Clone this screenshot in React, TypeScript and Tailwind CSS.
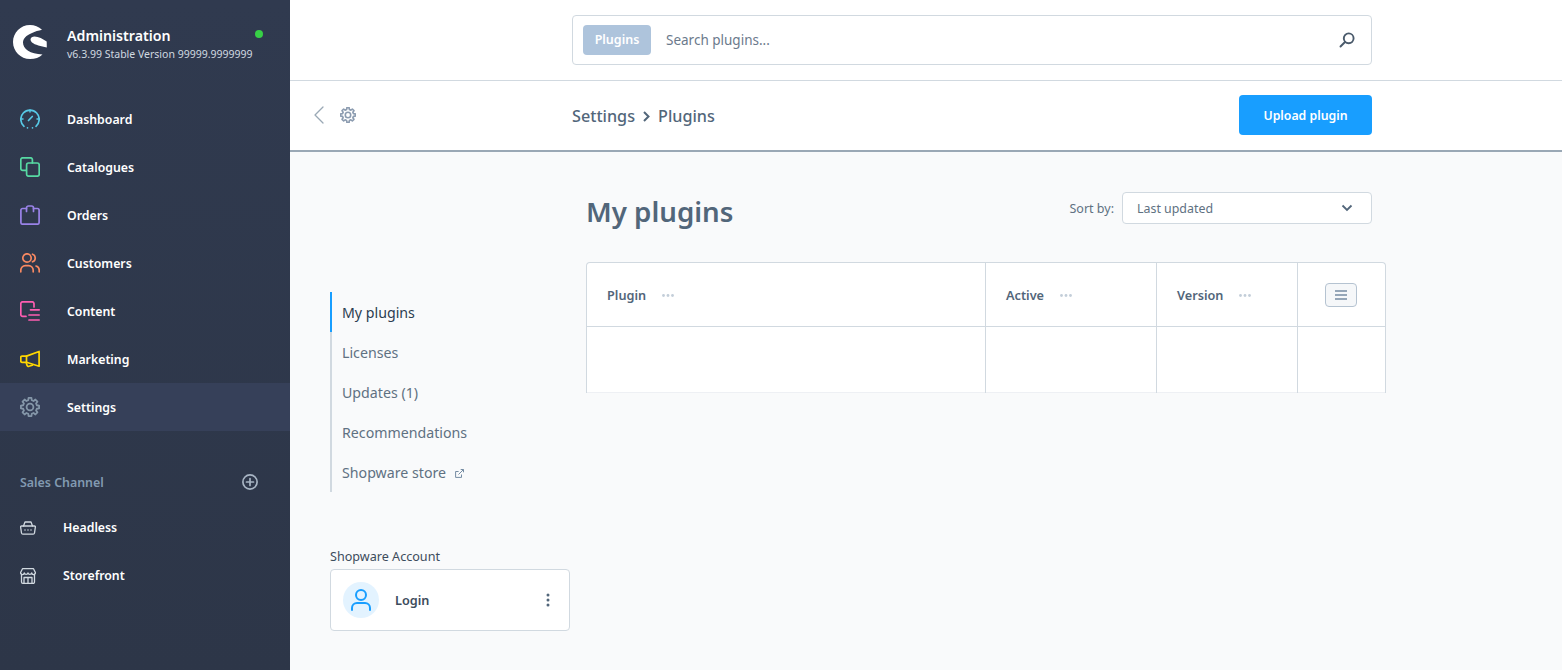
import React from "react";

function gearPath(outer: number, inner: number, teeth: number, c: number) {
  const pts: string[] = [];
  const step = (Math.PI * 2) / teeth;
  for (let i = 0; i < teeth; i++) {
    const a = i * step - Math.PI / 2;
    const add = (r: number, off: number) => {
      const x = c + r * Math.cos(a + off * step);
      const y = c + r * Math.sin(a + off * step);
      pts.push(`${x.toFixed(2)} ${y.toFixed(2)}`);
    };
    add(outer, -0.2);
    add(outer, 0.2);
    add(inner, 0.32);
    add(inner, 0.68);
  }
  return "M" + pts.join("L") + "Z";
}

function Gear({ size, color, strokeWidth }: { size: number; color: string; strokeWidth: number }) {
  return (
    <svg width={size} height={size} viewBox="0 0 20 20" fill="none" stroke={color} strokeWidth={strokeWidth} strokeLinejoin="round">
      <path d={gearPath(9.2, 7, 8, 10)} />
      <circle cx="10" cy="10" r="3.4" />
    </svg>
  );
}

function NavIcon({ name, color }: { name: string; color: string }) {
  const p = { width: 20, height: 20, viewBox: "0 0 20 20", fill: "none", stroke: color, strokeWidth: 1.7, strokeLinecap: "round" as const, strokeLinejoin: "round" as const };
  switch (name) {
    case "dashboard":
      return (
        <svg {...p}>
          <path d="M4 17.300A9.200 9.200 0 1 1 16 17.300" />
          <path d="M8.500 11.500 12.300 7.500" />
          <path d="M10 1v2M1.200 10h1.800M17 10h1.800" strokeWidth="1.500" />
          <path d="M7.500 18.800h.01M12.500 18.800h.01" />
        </svg>
      );
    case "catalogues":
      return (
        <svg {...p}>
          <path d="M6 13.400H2.700A1.900 1.900 0 0 1 .8 11.500V2.700A1.900 1.900 0 0 1 2.700.8h7.800a1.900 1.900 0 0 1 1.900 1.900V6" />
          <rect x="6.600" y="6" width="12.600" height="13.200" rx="1.900" />
        </svg>
      );
    case "orders":
      return (
        <svg {...p}>
          <path d="M6.500 3.500H2.600A1.700 1.700 0 0 0 .9 5.200V17.500A1.700 1.700 0 0 0 2.600 19.200H17.400A1.700 1.700 0 0 0 19.100 17.500V5.200A1.700 1.700 0 0 0 17.400 3.500H13.500" />
          <path d="M6.500 6.500V3a2 2 0 0 1 2-2h3a2 2 0 0 1 2 2v3.500" />
        </svg>
      );
    case "customers":
      return (
        <svg {...p}>
          <circle cx="7" cy="5" r="4.200" />
          <path d="M.8 18.800v-1.600a4.500 4.500 0 0 1 4.500-4.500h3.400a4.500 4.500 0 0 1 4.500 4.500v1.600" />
          <path d="M12.500 1.200a4 4 0 0 1 0 7.600M16 13a4.300 4.300 0 0 1 3.200 4.100v1.700" />
        </svg>
      );
    case "content":
      return (
        <svg {...p}>
          <path d="M14 6V2.700A1.900 1.900 0 0 0 12.100.8H2.700A1.900 1.900 0 0 0 .8 2.700v10.800a1.900 1.900 0 0 0 1.900 1.900H6" />
          <path d="M10.500 8.800h8.700M9 14h10.200M9 19h10.200" />
        </svg>
      );
    case "marketing":
      return (
        <svg {...p}>
          <path d="M19.100 2.500V17.200L6.500 13.300H2a1.200 1.200 0 0 1-1.200-1.200V8.300A1.200 1.200 0 0 1 2 7.100h4.500L19.100 2.500Z" />
          <path d="M6.500 7.100v6.200" />
          <path d="M6.200 13.500l.8 2.800a1.400 1.400 0 0 0 1.900.9l3.500-1" />
        </svg>
      );
    case "settings":
      return <Gear size={20} color={color} strokeWidth={1.8} />;
    case "headless":
      return (
        <svg width="16" height="14" viewBox="0 0 16 14" fill="none" stroke={color} strokeWidth="1.300" strokeLinecap="round" strokeLinejoin="round">
          <path d="M1.500 5h13a.9.900 0 0 1 .9.900L14.500 12a1.400 1.400 0 0 1-1.400 1.200H2.900A1.400 1.400 0 0 1 1.500 12L.6 5.900A.9.900 0 0 1 1.500 5Z" />
          <path d="M3.500 5 5 1h6l1.500 4" />
          <path d="M5 9h.01M8 9h.01M11 9h.01" strokeWidth="1.500" />
        </svg>
      );
    default:
      return (
        <svg width="16" height="16" viewBox="0 0 16 16" fill="none" stroke={color} strokeWidth="1.300" strokeLinecap="round" strokeLinejoin="round">
          <path d="M1.500 6.200V14a1.300 1.300 0 0 0 1.300 1.300h10.400a1.300 1.300 0 0 0 1.300-1.300V6.200" />
          <path d="M2.500.7h11L15.400 4.500a1.800 1.800 0 0 1-3.700.4 1.900 1.900 0 0 1-3.700 0 1.900 1.900 0 0 1-3.700 0 1.800 1.800 0 0 1-3.700-.4L2.500.7Z" />
          <path d="M4 15V9.500h8V15M8 9.500V15" />
        </svg>
      );
  }
}

const mainNav = [
  ["dashboard", "Dashboard", "#57c9e6"],
  ["catalogues", "Catalogues", "#57d9a3"],
  ["orders", "Orders", "#9a83e8"],
  ["customers", "Customers", "#f88962"],
  ["content", "Content", "#ff5db1"],
  ["marketing", "Marketing", "#ffd700"],
  ["settings", "Settings", "#8496a8"],
];

const tabs = ["My plugins", "Licenses", "Updates (1)", "Recommendations", "Shopware store"];

function Dots() {
  return (
    <svg className="mt-[2px]" width="12" height="3" viewBox="0 0 12 3" fill="#c3ced9">
      <circle cx="1.500" cy="1.500" r="1.400" />
      <circle cx="6" cy="1.500" r="1.400" />
      <circle cx="10.500" cy="1.500" r="1.400" />
    </svg>
  );
}

function HeadCell({ label }: { label: string }) {
  return (
    <div className="flex items-center pl-5 gap-[16px] border-b border-r border-[#d1d9e0]">
      <span className="text-[12.7px] pt-[3px] font-semibold text-[#52667a]">{label}</span>
      <Dots />
    </div>
  );
}

export default function App() {
  return (
    <div className="flex h-[670px] w-[1562px] overflow-hidden font-['Noto_Sans',sans-serif] bg-[#f9fafb]">
      <aside className="w-[290px] shrink-0 flex flex-col bg-gradient-to-b from-[#303a4f] to-[#2d3648] text-white">
        <div className="h-[95px] flex items-start pl-[13px] pt-[25px] relative">
          <svg width="34" height="34" viewBox="0 0 34 34">
            <path fill="#fff" d="M17 0C21.500 0 25.800 1.800 29 4.800C25.500 5.600 22 6.500 19 8C13 10.500 10 13.500 10 17.500C10 24 17 29 29.500 29.500C26.500 32.500 22 34 17 34C7.600 34 0 26.400 0 17S7.600 0 17 0Z" />
            <path fill="#fff" d="M17.500 14.500C17.500 12.500 19.500 11.500 21.500 11.500C25.500 11.500 30 14 33.700 16.500L33.800 22.500C28 21 22 20 19 17.500C18 16.500 17.500 15.500 17.500 14.500Z" />
          </svg>
          <div className="ml-5 flex flex-col pt-[1px]">
            <span className="text-[14.2px] leading-[20px] font-semibold">Administration</span>
            <span className="text-[10.5px] leading-[16px] text-[#d1d9e0] whitespace-nowrap">v6.3.99 Stable Version 99999.9999999</span>
          </div>
          <span className="absolute left-[255px] top-[30px] w-2 h-2 rounded-full bg-[#37d046]" />
        </div>
        <nav className="flex flex-col">
          {mainNav.map(([icon, label, color]) => (
            <div key={label} className={`h-12 flex items-center pl-5 ${label === "Settings" ? "bg-[#364059]" : ""}`}>
              <NavIcon name={icon} color={color} />
              <span className="ml-[27px] pt-[2px] text-[12.3px] font-semibold">{label}</span>
            </div>
          ))}
        </nav>
        <div className="mt-[28px] h-[48px] flex items-center justify-between pl-5 pr-[32px]">
          <span className="text-[12.4px] font-semibold text-[#829ab1]">Sales Channel</span>
          <svg className="-mt-[2px]" width="16" height="16" viewBox="0 0 16 16" fill="none" stroke="#a8b5c4" strokeWidth="1.700" strokeLinecap="round">
            <circle cx="8" cy="8" r="7.100" />
            <path d="M8 4.500v7M4.500 8h7" />
          </svg>
        </div>
        <div className="flex flex-col -mt-[3px]">
          {[["headless", "Headless"], ["storefront", "Storefront"]].map(([icon, label]) => (
            <div key={label} className="h-12 flex items-center pl-5">
              <span className="w-4 flex justify-center"><NavIcon name={icon} color="#d1d9e0" /></span>
              <span className="ml-[27px] text-[12.3px] font-semibold">{label}</span>
            </div>
          ))}
        </div>
      </aside>
      <div className="flex-1 flex flex-col min-w-0">
        <header className="h-[81px] shrink-0 bg-white border-b border-[#d1d9e0] pl-[282px] pt-[15px]">
          <div className="w-[800px] h-[50px] bg-white border border-[#d1d9e0] rounded flex items-center pl-[10px] pr-[16px]">
            <span className="w-[68px] h-[30px] rounded bg-[#aec4dc] text-white text-[12.5px] font-semibold flex items-center justify-center">Plugins</span>
            <span className="ml-[15px] flex-1 text-[13.5px] text-[#6b7a8c]">Search plugins...</span>
            <svg width="16" height="16" viewBox="0 0 16 16" fill="none" stroke="#4a5a6b" strokeWidth="1.900" strokeLinecap="round">
              <circle cx="9.700" cy="6.300" r="4.900" />
              <path d="M6 10 1.500 14.500" />
            </svg>
          </div>
        </header>
        <div className="h-[71px] shrink-0 bg-white border-b-2 border-[#9aa8b5] flex items-center relative pb-[2px]">
          <svg className="ml-6" width="10" height="18" viewBox="0 0 10 18" fill="none" stroke="#9aa8b5" strokeWidth="1.300" strokeLinecap="round" strokeLinejoin="round">
            <path d="M9 1 1 9l8 8" />
          </svg>
          <span className="ml-[16px] flex"><Gear size={16} color="#8c9cb0" strokeWidth={2} /></span>
          <div className="absolute left-[282px] top-[23px] flex items-center text-[16.2px] font-medium text-[#52667a]">
            <span>Settings</span>
            <svg className="mx-[8px]" width="7" height="11" viewBox="0 0 7 11" fill="none" stroke="#52667a" strokeWidth="2">
              <path d="m1 1 4.500 4.500L1 10" />
            </svg>
            <span>Plugins</span>
          </div>
          <button className="absolute left-[949px] top-[14px] w-[133px] h-10 pt-[3px] rounded bg-[#189eff] text-white text-[12.3px] font-semibold">Upload plugin</button>
        </div>
        <main className="flex-1 flex pl-10 min-h-0">
          <div className="w-[240px] shrink-0 flex flex-col pt-[140px]">
            <div className="flex flex-col border-l-2 border-[#d1d9e0]">
              {tabs.map((t, i) => (
                <div key={t} className={`h-10 flex items-center pl-[10px] pt-[2px] -ml-[2px] border-l-2 text-[14.2px] ${i === 0 ? "border-[#189eff] text-[#2b3d50]" : "border-transparent text-[#607182]"}`}>
                  {t}
                  {t === "Shopware store" && (
                    <svg className="ml-[9px]" width="9" height="9" viewBox="0 0 9 9" fill="none" stroke="#758ca3" strokeWidth="1">
                      <path d="M6.500 5.500v2.900H.6V2.500h3M3.500 5.500 8.400.6M5.700.5h2.800v2.800" />
                    </svg>
                  )}
                </div>
              ))}
            </div>
            <span className="mt-[56px] text-[12.6px] leading-[18px] text-[#3d4c5c]">Shopware Account</span>
            <div className="mt-[3px] h-[62px] bg-white border border-[#d1d9e0] rounded flex items-center pl-3 pr-[19px]">
              <span className="w-9 h-9 rounded-full bg-[#e3f3ff] flex items-center justify-center">
                <svg width="20" height="24" viewBox="0 0 20 24" fill="none" stroke="#189eff" strokeWidth="2" strokeLinecap="round">
                  <circle cx="10" cy="7" r="5" />
                  <path d="M1 22v-2a5 5 0 0 1 5-5h8a5 5 0 0 1 5 5v2" />
                </svg>
              </span>
              <span className="ml-4 pt-[2px] flex-1 text-[12.7px] font-semibold text-[#3d4c5c]">Login</span>
              <svg width="4" height="14" viewBox="0 0 4 14" fill="#52667a">
                <circle cx="2" cy="2" r="1.500" /><circle cx="2" cy="7" r="1.500" /><circle cx="2" cy="12" r="1.500" />
              </svg>
            </div>
          </div>
          <div className="ml-4 w-[800px] flex flex-col">
            <div className="h-[110px] pt-10 flex items-start pr-[14px]">
              <h1 className="text-[27.7px] leading-[42px] font-semibold text-[#52667a] flex-1 -mt-[2px]">My plugins</h1>
              <span className="text-[12.5px] text-[#607182] leading-8 pt-[1px] mr-2">Sort by:</span>
              <div className="w-[250px] h-8 bg-white border border-[#d1d9e0] rounded flex items-center justify-between pl-[14px] pr-[18px] text-[12.4px] text-[#607182]">
                <span className="pt-[2px]">Last updated</span>
                <svg width="12" height="8" viewBox="0 0 12 8" fill="none" stroke="#52667a" strokeWidth="1.800">
                  <path d="m1.500 1.500 4.500 4.500 4.500-4.500" />
                </svg>
              </div>
            </div>
            <div className="h-[130px] mb-0 bg-white border-x border-t border-[#d1d9e0] rounded-t grid grid-cols-[399px_171px_141px_1fr] grid-rows-[64px_1fr] shadow-[inset_0_-1px_0_#eef0f4] box-content">
              <HeadCell label="Plugin" />
              <HeadCell label="Active" />
              <HeadCell label="Version" />
              <div className="flex items-center justify-center pr-[2px] border-b border-[#d1d9e0]">
                <span className="w-8 h-6 rounded border border-[#b5c3d1] bg-[#f5f7f9] flex items-center justify-center">
                  <svg width="12" height="10" viewBox="0 0 12 10" stroke="#758ca3" strokeWidth="1.500"><path d="M0 1h12M0 5h12M0 9h12" /></svg>
                </span>
              </div>
              <div className="border-r border-[#d1d9e0]" />
              <div className="border-r border-[#d1d9e0]" />
              <div className="border-r border-[#d1d9e0]" />
              <div />
            </div>
          </div>
        </main>
      </div>
    </div>
  );
}
